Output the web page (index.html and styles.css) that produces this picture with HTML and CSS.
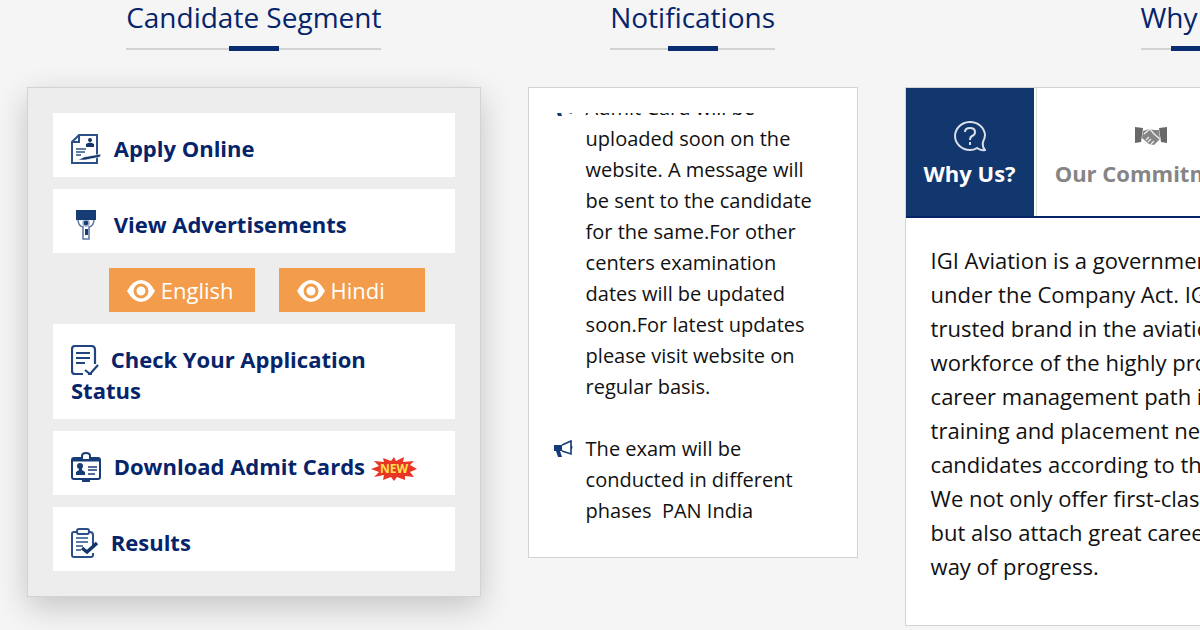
FILE: index.html
```html
<!DOCTYPE html>
<html lang="en">
<head>
    <meta charset="UTF-8">
    <meta name="viewport" content="width=device-width, initial-scale=1.0">
    <title>IGI Aviation</title>
    <link rel="stylesheet" href="styles.css">
</head>
<body>
    <main class="columns">
        <section class="column">
            <h2 class="title">Candidate Segment</h2>
            <div class="panel segment">
                <a class="item" href="#apply"><svg class="icon wide" viewBox="0 0 30 30" fill="none" stroke="#2c5089" stroke-width="2"><path d="M8 1H26V29H1V8ZM8 1V8H1"/><path d="M5 15H15M5 18H14M5 21H10" stroke-width="1.5"/><circle cx="19" cy="6" r="2" fill="#12356b" stroke="none"/><path d="M15 13V10Q19 7 23 10V13Z" fill="#12356b" stroke="none"/><path d="M7 26L13 23L30 20L29 23L14 26Z" fill="#12356b" stroke="#fff" stroke-width=".6"/></svg> Apply Online</a>
                <a class="item" href="#advertisements"><svg class="icon wide" viewBox="0 0 30 30" fill="none" stroke="#5b769f" stroke-width="1.5"><path d="M7 9Q7 16 12 17V29H18V17Q23 16 23 9"/><path d="M9 10Q15 5 21 10"/><circle cx="15" cy="13" r="3" fill="#163c76" stroke="#9badc7"/><path d="M14 19H17V25H14Z" fill="#163c76" stroke="none"/><path d="M5 0H25V10H5Z" fill="#163c76" stroke="none"/></svg> View Advertisements</a>
                <div class="languages">
                    <a class="language" href="#english"><svg class="eye" viewBox="0 0 28 22"><path d="M0 11Q6 0 14 0T28 11Q22 22 14 22T0 11Z" fill="#fff"/><circle cx="14" cy="11" r="6" fill="#fff" stroke="#f39c4b" stroke-width="3"/></svg> English</a>
                    <a class="language" href="#hindi"><svg class="eye" viewBox="0 0 28 22"><path d="M0 11Q6 0 14 0T28 11Q22 22 14 22T0 11Z" fill="#fff"/><circle cx="14" cy="11" r="6" fill="#fff" stroke="#f39c4b" stroke-width="3"/></svg> Hindi</a>
                </div>
                <a class="item" href="#status"><svg class="icon" viewBox="0 0 30 30" fill="none" stroke="#20457e" stroke-width="2.2"><path d="M12 29H4Q1 29 1 26V4Q1 1 4 1H20Q24 1 24 5V19M17 29H21"/><path d="M5 8H19M5 13H19M5 18H14" stroke-width="1.8"/><path d="M14 25L19 29L27 20"/></svg> Check Your Application Status</a>
                <a class="item" href="#admit-cards"><svg class="icon wide" viewBox="0 0 30 30" fill="none" stroke="#173d76" stroke-width="2"><rect x="1" y="6" width="28" height="21" rx="2"/><path d="M1 8H29" stroke-width="3"/><path d="M11 7V4Q11 1 15 1T19 4V7" fill="#fff"/><path d="M12 27V29H18V27"/><circle cx="9" cy="14" r="3" fill="#173d76" stroke="none"/><path d="M8 16H11V18L14 20V23H5V20L8 18Z" fill="#173d76" stroke="none"/><path d="M17 15H26M17 18H26M17 22H24" stroke-width="1.6"/></svg> Download Admit Cards <svg class="new" viewBox="0 0 46 24"><path d="M23 0L25 4L33 0L32 5L43 4L39 8L46 12L39 15L43 20L34 19L34 23L26 20L23 24L20 20L12 23L13 18L3 20L8 15L0 12L8 9L3 4L13 5L12 1L20 4Z" fill="#e93524"/><text class="new-text" x="23" y="16" text-anchor="middle">NEW</text></svg></a>
                <a class="item" href="#results"><svg class="icon" viewBox="0 0 30 30" fill="none" stroke="#2b4f88" stroke-width="2"><path d="M6 4H3Q1 4 1 6V27Q1 29 3 29H20Q22 29 22 27V25M17 4H19Q22 4 22 7V18"/><rect x="6" y="1" width="12" height="5" rx="2"/><path d="M5 10H17M5 14H17M5 18H12M5 22H10" stroke-width="1.4"/><path d="M11 20L16 24L26 15" stroke="#12356b" stroke-width="3.5"/></svg> Results</a>
            </div>
        </section>

        <section class="column">
            <h2 class="title">Notifications</h2>
            <div class="panel notices">
                <div class="ticker">
                    <ul class="notice-list">
                        <li class="notice"><svg class="horn" viewBox="0 0 20 18"><path d="M0 5H8V11H6L8 17H4L2 11H0Z" fill="#133b77"/><path d="M8 5L17 1V14L8 11" fill="none" stroke="#133b77" stroke-width="1.6"/><path d="M17 5Q20 7 17 10Z" fill="#133b77"/></svg><span>Admit Card will be uploaded soon on the website. A message will be sent to the candidate for the same.For other centers examination dates will be updated soon.For latest updates please visit website on regular basis.</span></li>
                        <li class="notice"><svg class="horn" viewBox="0 0 20 18"><path d="M0 5H8V11H6L8 17H4L2 11H0Z" fill="#133b77"/><path d="M8 5L17 1V14L8 11" fill="none" stroke="#133b77" stroke-width="1.6"/><path d="M17 5Q20 7 17 10Z" fill="#133b77"/></svg><span>The exam will be conducted in different phases&nbsp; PAN India</span></li>
                    </ul>
                </div>
            </div>
        </section>

        <section class="column">
            <h2 class="title">Why Us?</h2>
            <div class="panel about">
                <div class="tabs">
                    <button class="tab active" type="button">
                        <svg class="tab-icon" viewBox="0 0 32 32" fill="none" stroke="#d9e0ea" stroke-width="2"><path d="M29 22Q31 18 31 15A15 14 0 1 0 16 30Q20 30 23 28Q27 31 31 30Q28 27 29 22Z"/><path d="M11 12Q11 8 16 8T21 12Q21 15 18 16Q16 17 16 20M16 22V25"/></svg>
                        Why Us?
                    </button>
                    <button class="tab" type="button">
                        <svg class="tab-icon" viewBox="0 0 32 32"><path d="M0 7L8 8L6 22L0 23ZM32 7L24 8L26 22L32 23Z" fill="#686868"/><path d="M8 11L14 9L19 10L24 10L25 19L19 25L14 24L7 18Z" fill="#858585"/><path d="M9 14L15 9L19 14L25 19M11 20L14 17M13 22L16 19M16 24L19 21" fill="none" stroke="#eee" stroke-width="1.3"/></svg>
                        Our Commitment
                    </button>
                </div>
                <p class="about-text">
                    IGI Aviation is a government registered company<br>
                    under the Company Act. IGI Aviation is a most<br>
                    trusted brand in the aviation sector for the<br>
                    workforce of the highly professional people. The<br>
                    career management path is built on skills,<br>
                    training and placement needs of all the<br>
                    candidates according to the industry.<br>
                    We not only offer first-class training<br>
                    but also attach great career value to the<br>
                    way of progress.
                </p>
            </div>
        </section>
    </main>
</body>
</html>
```
FILE: styles.css
```css
* {
    box-sizing: border-box;
}

body {
    margin: 0;
    overflow: hidden;
    background-color: #f5f5f5;
    color: #111;
    font-family: "Open Sans", Arial, sans-serif;
    font-size: 22px;
    line-height: 31px;
}

.columns {
    display: grid;
    grid-template-columns: 37.8vw 27.5vw 48.5vw;
    gap: 47px;
    align-items: start;
    padding: 0 0 24px 27px;
}

.column {
    display: flex;
    flex-direction: column;
    align-items: center;
}

.title {
    display: flex;
    flex-direction: column;
    align-items: center;
    margin: 0 0 36px;
    color: #06246a;
    font-size: 28px;
    font-weight: normal;
    line-height: 34px;
}

/* thin rule with the short thick bar on it */
.title::after {
    content: "";
    width: 100%;
    height: 5px;
    margin-top: 12px;
    background: linear-gradient(#0a2c70, #0a2c70) center / 50px 5px no-repeat,
                linear-gradient(#d2d4d4, #d2d4d4) center / 100% 2px no-repeat;
}

.panel {
    width: 100%;
    border: 1px solid #d2d3d4;
    background-color: white;
}

.segment {
    display: flex;
    flex-direction: column;
    gap: 12px;
    padding: 25px;
    background-color: #ededed;
    box-shadow: 0 10px 30px rgba(0, 0, 0, 0.2);
}

.item {
    padding: 20px 18px 13px;
    background-color: white;
    color: #06246a;
    font-weight: bold;
    text-decoration: none;
}

.item:hover {
    color: #f39c4b;
}

.icon {
    width: 30px;
    height: 30px;
    margin-right: 4px;
    vertical-align: -7px;
}

.wide {
    margin-right: 7px;
}

.new {
    width: 46px;
    height: 24px;
    vertical-align: -6px;
}

.new-text {
    fill: #ffe14a;
    font-size: 12px;
    font-weight: bold;
}

.languages {
    display: flex;
    gap: 24px;
    padding: 3px 30px 0 56px;
}

.language {
    flex: 1;
    padding: 6px 18px;
    background-color: #f39c4b;
    color: white;
    line-height: 32px;
    text-decoration: none;
}

.eye {
    width: 28px;
    height: 22px;
    vertical-align: -3px;
}

.notices {
    padding: 25px;
}

.ticker {
    height: 419px;
    overflow: hidden;
    font-size: 20px;
}

.notice-list {
    margin: -21px 0 0;
    padding: 0;
    list-style: none;
}

.notice {
    display: flex;
    gap: 12px;
    margin-bottom: 31px;
}

.horn {
    flex: none;
    width: 20px;
    height: 18px;
    margin-top: 7px;
}

.tabs {
    display: flex;
    gap: 2px;
    overflow: hidden;
    border-bottom: 2px solid #06246a;
}

.tab {
    display: flex;
    flex: none;
    flex-direction: column;
    align-items: center;
    gap: 6px;
    padding: 32px 18px 27px;
    border: 0;
    border-left: 1px solid #dadbdc;
    background-color: white;
    color: #858585;
    font: inherit;
    font-weight: bold;
    white-space: nowrap;
}

.tab.active {
    border-left: 0;
    background-color: #12376e;
    color: white;
}

.tab-icon {
    width: 32px;
    height: 32px;
}

.about-text {
    margin: 0;
    padding: 25px 25px 42px;
    line-height: 34px;
    white-space: nowrap;
}
```
